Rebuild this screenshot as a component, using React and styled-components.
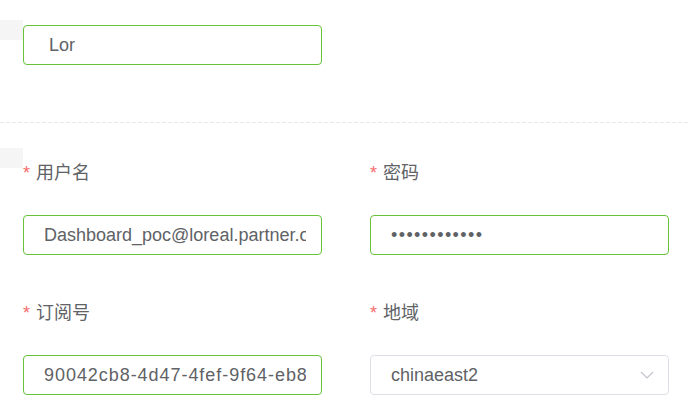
import React from 'react'
import styled, { createGlobalStyle } from 'styled-components'

const GlobalStyle = createGlobalStyle`
	* { box-sizing: border-box; }
	body {
		margin: 0;
		background: #fff;
		color: #606266;
		font-family: "Liberation Sans", "Noto Sans CJK SC", sans-serif;
	}
`

const Page = styled.div`
	width: 688px;
`
const Section = styled.section`
	display: flex;
	align-items: flex-start;
	padding-top: ${p => p.$top}px;
`
const Tab = styled.div`
	flex: none;
	width: 23px;
	height: 20px;
	background: #f5f5f5;
`
const Body = styled.div`
	margin-top: 5px;
`
const Divider = styled.div`
	margin-top: 57px;
	height: 1px;
	background: repeating-linear-gradient(to right, #e8e8e8 0 4px, transparent 4px 6px);
`
const Grid = styled.div`
	display: grid;
	grid-template-columns: 299px 299px;
	column-gap: 48px;
	row-gap: 38px;
`
const Label = styled.label`
	display: block;
	height: 40px;
	line-height: 40px;
	margin-bottom: 22px;
	font-size: 18px;
	color: #606266;
`
const Required = styled.span`
	color: #f56c6c;
	margin-right: 6px;
`
const Input = styled.input`
	display: block;
	width: ${p => p.$width || '100%'};
	height: 40px;
	padding: 0 15px 0 ${p => p.$inset || 20}px;
	border: 1px solid #67c23a;
	border-radius: 4px;
	background: #fff;
	color: #606266;
	font-family: inherit;
	font-size: 18px;
	letter-spacing: ${p => p.$tracking || 0}px;
	outline: none;
`
const Select = styled.div`
	display: flex;
	align-items: center;
	justify-content: space-between;
	height: 40px;
	padding: 0 14px 0 20px;
	border: 1px solid #dcdfe6;
	border-radius: 4px;
	background: #fff;
	font-size: 18px;
	color: #606266;
`

const Chevron = () => (
	<svg width="14" height="8" viewBox="0 0 14 8" fill="none">
		<polyline points="1,1 7,7 13,1" stroke="#c0c4cc" strokeWidth="1.2" />
	</svg>
)

const Field = ({ label, children }) => (
	<div>
		<Label><Required>*</Required>{label}</Label>
		{children}
	</div>
)

const App = () => {
	return (
		<Page>
			<GlobalStyle />
			<Section $top={20}>
				<Tab />
				<Body>
					<Input $width="299px" $inset={25} value="Lor" readOnly />
				</Body>
			</Section>
			<Divider />
			<Section $top={25}>
				<Tab />
				<Body>
					<Grid>
						<Field label="用户名">
							<Input value="Dashboard_poc@loreal.partner.onmschina.cn" readOnly />
						</Field>
						<Field label="密码">
							<Input type="password" value="abcdefghijkl" $tracking={1.4} readOnly />
						</Field>
						<Field label="订阅号">
							<Input value="90042cb8-4d47-4fef-9f64-eb8c1a2d3e4f" $tracking={0.95} readOnly />
						</Field>
						<Field label="地域">
							<Select>
								<span>chinaeast2</span>
								<Chevron />
							</Select>
						</Field>
					</Grid>
				</Body>
			</Section>
		</Page>
	)
}

export default App
